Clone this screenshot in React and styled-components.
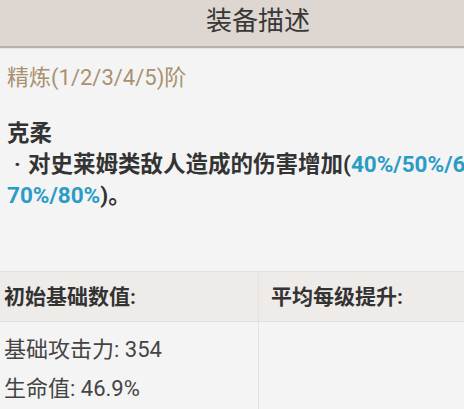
import React from 'react'
import styled, { createGlobalStyle } from 'styled-components'

const Global = createGlobalStyle`
  body {
    margin: 0;
    overflow: hidden;
    background: #f4f4f4;
    font-family: Roboto, "Noto Sans CJK SC", sans-serif;
  }
`

const Panel = styled.div`
  width: 516px;
  min-height: 409px;
  background: #f4f4f4;
`

const Header = styled.div`
  height: 46px;
  background: #ded6d0;
  border-bottom: 2px solid #b9afa9;
  box-shadow: 0 1px 0 #ece3df;
  text-align: center;
  font-size: 26px;
  line-height: 42px;
  color: #383838;
`

const Body = styled.div`
  padding: 15px 7px 0;
  height: 223px;
  box-sizing: border-box;
`

const Refine = styled.div`
  font-size: 22px;
  line-height: 30px;
  color: #a99170;
`

const Effect = styled.div`
  margin-top: 25px;
  font-size: 22.5px;
  line-height: 31px;
  font-weight: 700;
  color: #333;
  white-space: nowrap;
`

const Bullet = styled.span`
  display: inline-block;
  width: 21px;
  text-align: center;
`

const Value = styled.span`
  color: #2b9cc6;
`

const Table = styled.div`
  display: grid;
  grid-template-columns: 258px 1fr;
  border-top: 1px solid #e4e0dd;
`

const Cell = styled.div`
  padding-left: ${p => (p.$right ? '12px' : '4px')};
  border-left: ${p => (p.$right ? '1px solid #e4e1de' : 'none')};
  background: ${p => (p.$head ? '#efebe8' : '#f4f4f4')};
  border-bottom: ${p => (p.$head ? '1px solid #e2deda' : 'none')};
  height: ${p => (p.$head ? '50px' : '87px')};
  box-sizing: border-box;
  font-size: ${p => (p.$head ? '21px' : '22px')};
  color: ${p => (p.$head ? '#333' : '#444')};
  font-weight: ${p => (p.$head ? 700 : 400)};
  line-height: ${p => (p.$head ? '50px' : '39px')};
  padding-top: ${p => (p.$head ? '0' : '8px')};
`

export default function App() {
  return (
    <Panel>
      <Global />
      <Header>装备描述</Header>
      <Body>
        <Refine>精炼(1/2/3/4/5)阶</Refine>
        <Effect>
          克柔
          <br />
          <Bullet>·</Bullet>对史莱姆类敌人造成的伤害增加(<Value>40%/50%/60%/</Value>
          <br />
          <Value>70%/80%</Value>)。
        </Effect>
      </Body>
      <Table>
        <Cell $head>初始基础数值:</Cell>
        <Cell $head $right>平均每级提升:</Cell>
        <Cell>
          基础攻击力: 354
          <br />
          生命值: 46.9%
        </Cell>
        <Cell $right />
      </Table>
    </Panel>
  )
}
